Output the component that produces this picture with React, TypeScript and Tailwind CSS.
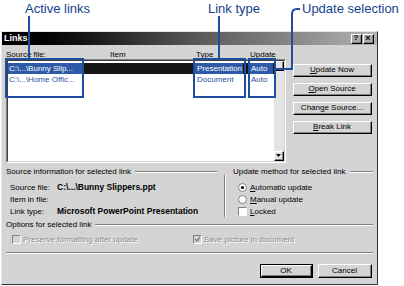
import React from 'react';

const Raised = ({ children, className = '', isDefault = false }: { children?: React.ReactNode; className?: string; isDefault?: boolean }) => (
  <div className={`${isDefault ? 'border border-black' : ''} ${className}`}>
    <div className="h-full border-t border-l border-r border-b border-t-white border-l-white border-r-black border-b-black">
      <div className="h-full border-r border-b border-r-[#808080] border-b-[#808080] flex items-center justify-center text-[8px] leading-none text-black">
        {children}
      </div>
    </div>
  </div>
);

const Etched = ({ className = '' }: { className?: string }) => (
  <div className={`h-[2px] border-t border-b border-t-[#808080] border-b-white ${className}`} />
);

const Check = ({ checked = false, disabled = false }: { checked?: boolean; disabled?: boolean }) => (
  <div
    className={`w-[9px] h-[9px] border-t border-l border-r border-b border-t-[#808080] border-l-[#808080] border-r-white border-b-white flex items-center justify-center ${
      disabled ? 'bg-[#d4d4d4]' : 'bg-white'
    }`}
  >
    {checked && (
      <svg width="7" height="7" viewBox="0 0 7 7">
        <path d="M1 3 L3 5 L6 1" stroke={disabled ? '#808080' : '#000'} strokeWidth="1.4" fill="none" />
      </svg>
    )}
  </div>
);

const Radio = ({ checked = false }: { checked?: boolean }) => (
  <svg width="9" height="9" viewBox="0 0 9 9">
    <circle cx="4.5" cy="4.5" r="4" fill="#fff" stroke="#808080" strokeWidth="1" />
    {checked && <circle cx="4.5" cy="4.5" r="1.6" fill="#000" />}
  </svg>
);

export default function App() {
  return (
    <div className="relative w-[404px] h-[286px] bg-white overflow-hidden font-['Liberation_Sans',Arial,sans-serif]">
      <div className="h-[31px]" />

      {/* Dialog */}
      <div className="ml-[1px] w-[377px] h-[254px] bg-[#d4d4d4] border-t border-l border-r border-b border-t-[#e8e8e8] border-l-[#e8e8e8] border-r-[#303030] border-b-[#303030] flex flex-col">
        {/* Title bar */}
        <div className="h-[13px] bg-linear-to-r from-black via-[#555] to-[#b4b4b4] flex items-center pl-[2px] pr-[3px]">
          <span className="text-white font-bold text-[9px] leading-none">Links</span>
          <div className="ml-auto flex gap-[1px]">
            <Raised className="w-[11px] h-[10px]">
              <span className="font-bold text-[8px]">?</span>
            </Raised>
            <Raised className="w-[11px] h-[10px]">
              <span className="font-bold text-[9px]">×</span>
            </Raised>
          </div>
        </div>

        {/* Body */}
        <div className="flex-1 flex flex-col px-[4px] text-[8px] leading-[9px] text-black">
          {/* Column headers */}
          <div className="mt-[5px] h-[9px] flex">
            <span className="w-[104px]">Source file:</span>
            <span className="w-[86px]">Item</span>
            <span className="w-[54px]">Type</span>
            <span>Update</span>
          </div>

          {/* List + buttons */}
          <div className="h-[104px] flex">
            <div className="w-[280px] h-full border-t border-l border-r border-b border-t-[#808080] border-l-[#808080] border-r-white border-b-white">
              <div className="h-full border-t border-l border-r border-b border-t-[#404040] border-l-[#404040] border-r-[#d4d4d4] border-b-[#d4d4d4] bg-white flex">
                <div className="flex-1 pt-[2px] flex flex-col">
                  <div className="h-[11px] bg-[#151515] flex items-center text-white">
                    <div className="w-[74px] h-full bg-[#2c5aa7] pl-[1px] flex items-center">C:\...\Bunny Slip...</div>
                    <div className="w-[113px]" />
                    <div className="w-[48px] h-full bg-[#2c5aa7] pl-[2px] flex items-center">Presentation</div>
                    <div className="w-[7px]" />
                    <div className="w-[23px] h-full bg-[#2c5aa7] pl-[1px] flex items-center">Auto</div>
                  </div>
                  <div className="h-[11px] flex items-center text-[#1f4e9e]">
                    <div className="w-[74px] pl-[1px]">C:\...\Home Offic...</div>
                    <div className="w-[113px]" />
                    <div className="w-[48px] pl-[2px]">Document</div>
                    <div className="w-[7px]" />
                    <div className="w-[23px] pl-[1px]">Auto</div>
                  </div>
                </div>
                <div className="w-[10px] flex flex-col bg-[#e4e4e4]">
                  <Raised className="h-[10px]" />
                  <div className="flex-1" />
                  <Raised className="h-[10px]">
                    <svg width="5" height="3" viewBox="0 0 5 3">
                      <path d="M0 0 H5 L2.5 3 Z" fill="#000" />
                    </svg>
                  </Raised>
                </div>
              </div>
            </div>

            <div className="ml-[7px] w-[79px] pt-[5px] flex flex-col gap-[6px]">
              <Raised className="h-[13px]"><span><u>U</u>pdate Now</span></Raised>
              <Raised className="h-[13px]"><span><u>O</u>pen Source</span></Raised>
              <Raised className="h-[13px]"><span>Chan<u>g</u>e Source...</span></Raised>
              <Raised className="h-[13px]"><span><u>B</u>reak Link</span></Raised>
            </div>
          </div>

          {/* Source info + update method */}
          <div className="mt-[4px] flex">
            <div className="w-[211px] flex flex-col">
              <div className="h-[9px] flex items-center">
                <span>Source information for selected link</span>
                <Etched className="flex-1 ml-[4px]" />
              </div>
              <div className="mt-[5px] pl-[4px] flex flex-col">
                <div className="h-[12px] flex items-center">
                  <span className="w-[47px]">Source file:</span>
                  <span className="font-bold text-[8.5px]">C:\...\Bunny Slippers.ppt</span>
                </div>
                <div className="h-[12px] flex items-center">
                  <span className="w-[47px]">Item in file:</span>
                </div>
                <div className="h-[12px] flex items-center">
                  <span className="w-[47px]">Link type:</span>
                  <span className="font-bold text-[8.5px]">Microsoft PowerPoint Presentation</span>
                </div>
              </div>
            </div>

            <div className="w-[16px] flex justify-center">
              <div className="mt-[8px] h-[42px] w-[2px] border-l border-r border-l-[#808080] border-r-white" />
            </div>

            <div className="flex-1 flex flex-col">
              <div className="h-[9px] flex items-center">
                <span>Update method for selected link</span>
                <Etched className="flex-1 ml-[4px]" />
              </div>
              <div className="mt-[5px] pl-[5px] flex flex-col">
                <div className="h-[12px] flex items-center gap-[3px]">
                  <Radio checked />
                  <span><u>A</u>utomatic update</span>
                </div>
                <div className="h-[12px] flex items-center gap-[3px]">
                  <Radio />
                  <span><u>M</u>anual update</span>
                </div>
                <div className="h-[12px] flex items-center gap-[3px]">
                  <Check />
                  <span><u>L</u>ocked</span>
                </div>
              </div>
            </div>
          </div>

          {/* Options */}
          <div className="mt-[3px] h-[9px] flex items-center">
            <span>Options for selected link</span>
            <Etched className="flex-1 ml-[4px]" />
          </div>
          <div className="mt-[5px] h-[10px] pl-[6px] flex items-center text-[#8c8c8c]">
            <div className="w-[181px] flex items-center gap-[2px]">
              <Check disabled />
              <span className="[text-shadow:1px_1px_0_#fff]">Preserve formatting after update</span>
            </div>
            <div className="flex items-center gap-[2px]">
              <Check checked disabled />
              <span className="[text-shadow:1px_1px_0_#fff]">Save picture in document</span>
            </div>
          </div>

          <Etched className="mt-[8px]" />

          <div className="mt-[10px] mr-[1px] flex justify-end gap-[5px]">
            <Raised isDefault className="w-[53px] h-[14px]"><span>OK</span></Raised>
            <Raised className="w-[54px] h-[14px]"><span>Cancel</span></Raised>
          </div>
        </div>
      </div>

      {/* Callout labels */}
      <span className="absolute left-[25px] top-[1px] text-[13px] leading-[15px] text-[#143f8c]">Active links</span>
      <span className="absolute left-[208px] top-[1px] text-[13px] leading-[15px] text-[#143f8c]">Link type</span>
      <span className="absolute left-[302px] top-[1px] text-[13px] leading-[15px] text-[#143f8c]">Update selection</span>

      {/* Callout lines and boxes */}
      <svg className="absolute inset-0 pointer-events-none" width="404" height="286" viewBox="0 0 404 286">
        <g stroke="#1f4e9e" strokeWidth="2" fill="none">
          <path d="M29 16 V58" />
          <path d="M219 16 V58" />
          <path d="M275 69 H292 V14 Q292 9 297 9 H300" />
          <rect x="6" y="59" width="77" height="38" />
          <rect x="194" y="59" width="51" height="38" />
          <rect x="249" y="59" width="26" height="38" />
        </g>
      </svg>
    </div>
  );
}
